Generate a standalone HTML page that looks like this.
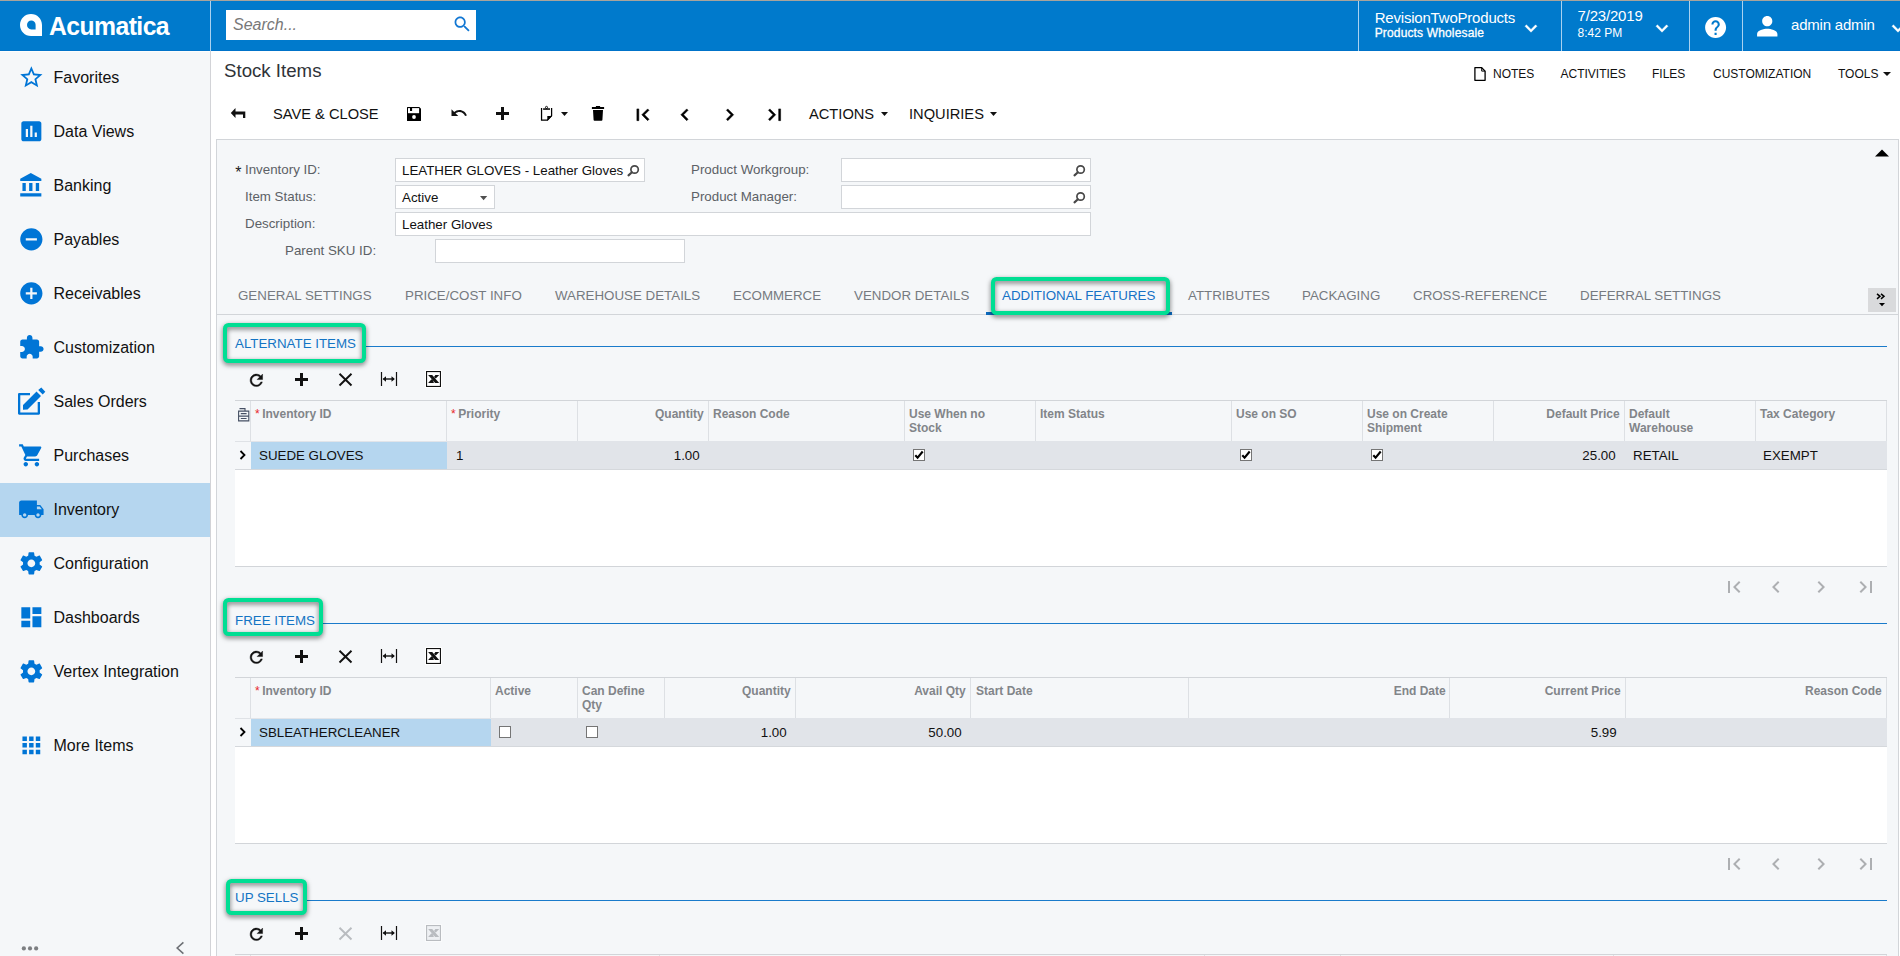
<!DOCTYPE html>
<html lang="en"><head><meta charset="utf-8"><title>Stock Items</title>
<style>
*{box-sizing:border-box;margin:0;padding:0}
html,body{width:1900px;height:956px;overflow:hidden;background:#fff}
body{font-family:"Liberation Sans",sans-serif;color:#000;position:relative}
#root{position:absolute;left:0;top:0;width:1900px;height:956px;overflow:hidden;background:#fff}
.ab{position:absolute;display:block}
.t{position:absolute;white-space:nowrap;line-height:1;transform:translateY(-50%)}
.r{transform:translate(-100%,-50%)}
.nav{font-size:16px;color:#111;margin-top:1px;margin-left:.5px}
.lbl{font-size:13.33px;color:#5c6166}
.inp{position:absolute;background:#fff;border:1px solid #d2d5d9;height:24px}
.val{font-size:13.33px;color:#111;margin-top:.5px}
.tab{font-size:13.33px;color:#757a80;margin-top:.5px}
.tb{font-size:14.67px;color:#111;margin-top:-.4px}
.tl{font-size:12px;color:#111}
.hd{font-size:12px;font-weight:bold;color:#828589;line-height:14px;position:absolute;white-space:nowrap}
.hr{text-align:right}
.cell{font-size:13.33px;color:#111}
.sec{font-size:13.33px;color:#1374c4;margin-top:.6px}
.hl{position:absolute;border:4px solid #00de93;border-radius:5.5px;filter:drop-shadow(0 2px 2.5px rgba(0,0,0,.55))}
.cb{position:absolute;width:12px;height:12px;background:#fff;border:1px solid #757575}
</style></head><body><div id="root">

<div class="ab " style="left:0px;top:0px;width:1900px;height:51px;background:#007acc"></div>
<div class="ab " style="left:0px;top:0px;width:1900px;height:1px;background:#a8a49c"></div>
<div class="ab " style="left:0px;top:50px;width:1900px;height:1px;background:#0073c9"></div>
<div class="ab " style="left:210px;top:1px;width:1px;height:50px;background:#a9d2f0"></div>
<svg class="ab" style="left:19px;top:13px" width="24" height="24" viewBox="0 0 24 24"><path fill="#fff" d="M12 1C5.9 1 1 5.9 1 12s4.900 11 11 11h11V12C23 5.900 18.100 1 12 1zm.300 6.500c2.400 0 4.300 1.900 4.300 4.300v4.600h-4.300c-2.400 0-4.300-2-4.300-4.400s1.900-4.500 4.300-4.500z" fill-rule="evenodd"/></svg>
<div class="t " style="left:49px;top:26px;font-size:26px;font-weight:bold;color:#fff;letter-spacing:-.6px;transform:translateY(-50%) scaleX(.952);transform-origin:0 50%">Acumatica</div>
<div class="ab " style="left:226px;top:10px;width:250px;height:30px;background:#fff"></div>
<div class="t " style="left:233px;top:25px;font-size:16px;font-style:italic;color:#787878">Search...</div>
<svg class="ab" style="left:451.60px;top:14.10px" width="20.6" height="20.6" viewBox="0 0 24 24"><path fill="#1277d3" d="M15.5 14h-.79l-.28-.27C15.41 12.59 16 11.11 16 9.5 16 5.91 13.09 3 9.5 3S3 5.91 3 9.5 5.91 16 9.5 16c1.61 0 3.09-.59 4.23-1.57l.27.28v.79l5 4.99L20.49 19l-4.99-5zm-6 0C7.01 14 5 11.99 5 9.5S7.01 5 9.5 5 14 7.01 14 9.5 11.99 14 9.5 14z" /></svg>
<div class="ab " style="left:1358px;top:1px;width:1px;height:50px;background:#a9d2f0"></div>
<div class="ab " style="left:1561px;top:1px;width:1px;height:50px;background:#a9d2f0"></div>
<div class="ab " style="left:1689px;top:1px;width:1px;height:50px;background:#a9d2f0"></div>
<div class="ab " style="left:1742px;top:1px;width:1px;height:50px;background:#a9d2f0"></div>
<div class="t " style="left:1374.7px;top:16.5px;font-size:15px;color:#fff;letter-spacing:-.2px">RevisionTwoProducts</div>
<div class="t " style="left:1374.7px;top:33px;font-size:12px;color:#fff;letter-spacing:.15px;-webkit-text-stroke:.3px #fff">Products Wholesale</div>
<svg class="ab" style="left:1519.00px;top:17.20px" width="24" height="24" viewBox="0 0 24 24"><path fill="#fff" d="M7.41 7.84L12 12.42l4.59-4.58L18 9.25l-6 6-6-6z" stroke="#fff" stroke-width=".4"/></svg>
<div class="t " style="left:1577.6px;top:15px;font-size:15px;color:#fff;letter-spacing:-.2px">7/23/2019</div>
<div class="t " style="left:1577.6px;top:33px;font-size:12px;color:#fff">8:42 PM</div>
<svg class="ab" style="left:1650.00px;top:17.20px" width="24" height="24" viewBox="0 0 24 24"><path fill="#fff" d="M7.41 7.84L12 12.42l4.59-4.58L18 9.25l-6 6-6-6z" stroke="#fff" stroke-width=".4"/></svg>
<svg class="ab" style="left:1703.00px;top:14.70px" width="25.2" height="25.2" viewBox="0 0 24 24"><path fill="#fff" d="M12 2C6.48 2 2 6.48 2 12s4.48 10 10 10 10-4.48 10-10S17.52 2 12 2zm1 17h-2v-2h2v2zm2.070-7.75l-.9.92C13.45 12.9 13 13.5 13 15h-2v-.5c0-1.1.45-2.1 1.17-2.83l1.24-1.26c.37-.36.59-.86.59-1.41 0-1.1-.9-2-2-2s-2 .9-2 2H8c0-2.21 1.79-4 4-4s4 1.79 4 4c0 .88-.36 1.68-.93 2.25z" /></svg>
<svg class="ab" style="left:1752.25px;top:10.95px" width="30.5" height="30.5" viewBox="0 0 24 24"><path fill="#fff" d="M12 12c2.21 0 4-1.79 4-4s-1.79-4-4-4-4 1.79-4 4 1.79 4 4 4zm0 2c-2.67 0-8 1.34-8 4v2h16v-2c0-2.66-5.33-4-8-4z" /></svg>
<div class="t " style="left:1791px;top:24.4px;font-size:15px;color:#fff;letter-spacing:-.2px">admin admin</div>
<svg class="ab" style="left:1886.00px;top:17.20px" width="24" height="24" viewBox="0 0 24 24"><path fill="#fff" d="M7.41 7.84L12 12.42l4.59-4.58L18 9.25l-6 6-6-6z" stroke="#fff" stroke-width=".4"/></svg>
<div class="ab " style="left:0px;top:51px;width:210px;height:905px;background:#f5f7f9"></div>
<div class="ab " style="left:210px;top:51px;width:1px;height:905px;background:#d2d3d7"></div>
<div class="ab " style="left:0px;top:51px;width:210px;height:1px;background:#fdfdfc"></div>
<div class="ab " style="left:0px;top:483px;width:210px;height:54px;background:#b5d6ef"></div>
<svg class="ab" style="left:18.15px;top:63.85px" width="26.7" height="26.7" viewBox="0 0 24 24"><path fill="#0075d6" d="M22 9.24l-7.19-.62L12 2 9.19 8.63 2 9.24l5.46 4.73L5.82 21 12 17.27 18.18 21l-1.63-7.03L22 9.24zM12 15.4l-3.76 2.27 1-4.28-3.32-2.88 4.38-.38L12 6.1l1.71 4.04 4.38.38-3.32 2.88 1 4.28L12 15.4z" /></svg>
<div class="t nav" style="left:53px;top:77px;">Favorites</div>
<svg class="ab" style="left:18.15px;top:117.85px" width="26.7" height="26.7" viewBox="0 0 24 24"><path fill="#0075d6" d="M19 3H5c-1.1 0-2 .9-2 2v14c0 1.1.9 2 2 2h14c1.1 0 2-.9 2-2V5c0-1.1-.9-2-2-2zM9 17H7v-7h2v7zm4 0h-2V7h2v10zm4 0h-2v-4h2v4z" /></svg>
<div class="t nav" style="left:53px;top:131px;">Data Views</div>
<svg class="ab" style="left:18.15px;top:171.85px" width="26.7" height="26.7" viewBox="0 0 24 24"><path fill="#0075d6" d="M4 10v7h3v-7H4zm6 0v7h3v-7h-3zM2 22h19v-3H2v3zm14-12v7h3v-7h-3zm-4.5-9L2 6v2h19V6l-9.5-5z" /></svg>
<div class="t nav" style="left:53px;top:185px;">Banking</div>
<svg class="ab" style="left:18.15px;top:225.85px" width="26.7" height="26.7" viewBox="0 0 24 24"><path fill="#0075d6" d="M12 2C6.48 2 2 6.48 2 12s4.48 10 10 10 10-4.48 10-10S17.52 2 12 2zm5 11H7v-2h10v2z" /></svg>
<div class="t nav" style="left:53px;top:239px;">Payables</div>
<svg class="ab" style="left:18.15px;top:279.85px" width="26.7" height="26.7" viewBox="0 0 24 24"><path fill="#0075d6" d="M12 2C6.48 2 2 6.48 2 12s4.48 10 10 10 10-4.48 10-10S17.52 2 12 2zm5 11h-4v4h-2v-4H7v-2h4V7h2v4h4v2z" /></svg>
<div class="t nav" style="left:53px;top:293px;">Receivables</div>
<svg class="ab" style="left:18.15px;top:333.85px" width="26.7" height="26.7" viewBox="0 0 24 24"><path fill="#0075d6" d="M20.5 11H19V7c0-1.1-.9-2-2-2h-4V3.5C13 2.12 11.88 1 10.5 1S8 2.12 8 3.5V5H4c-1.1 0-1.99.9-1.99 2v3.8H3.5c1.49 0 2.7 1.21 2.7 2.7s-1.21 2.7-2.7 2.7H2V20c0 1.1.9 2 2 2h3.8v-1.5c0-1.49 1.21-2.7 2.7-2.7 1.49 0 2.7 1.21 2.7 2.7V22H17c1.1 0 2-.9 2-2v-4h1.5c1.38 0 2.5-1.12 2.5-2.5S21.880 11 20.5 11z" /></svg>
<div class="t nav" style="left:53px;top:347px;">Customization</div>
<svg class="ab" style="left:17px;top:386px" width="30" height="30" viewBox="0 0 30 30"><path fill="none" stroke="#0075d6" stroke-width="2.300" stroke-linejoin="round" d="M13 8.150H2.150V27.550H21.850V16"/><path fill="#0075d6" d="M6 19L19.500 5.500l4.500 4.500L10.500 23.500l-4.500.3zM21.200 4l3.100-2.400 4 4.200-2.600 2.600z"/></svg>
<div class="t nav" style="left:53px;top:401px;">Sales Orders</div>
<svg class="ab" style="left:18.15px;top:441.85px" width="26.7" height="26.7" viewBox="0 0 24 24"><path fill="#0075d6" d="M7 18c-1.1 0-1.99.9-1.99 2S5.9 22 7 22s2-.9 2-2-.9-2-2-2zM1 2v2h2l3.6 7.59-1.35 2.45c-.16.28-.25.61-.25.96 0 1.1.9 2 2 2h12v-2H7.42c-.14 0-.25-.11-.25-.25l.03-.12.9-1.63h7.45c.75 0 1.41-.41 1.75-1.03l3.58-6.49c.08-.14.12-.31.12-.48 0-.55-.45-1-1-1H5.21l-.94-2H1zm16 16c-1.1 0-1.99.9-1.99 2s.89 2 1.99 2 2-.9 2-2-.9-2-2-2z" /></svg>
<div class="t nav" style="left:53px;top:455px;">Purchases</div>
<svg class="ab" style="left:18.15px;top:495.85px" width="26.7" height="26.7" viewBox="0 0 24 24"><path fill="#0075d6" d="M20 8h-3V4H3c-1.1 0-2 .9-2 2v11h2c0 1.66 1.34 3 3 3s3-1.34 3-3h6c0 1.66 1.34 3 3 3s3-1.34 3-3h2v-5l-3-4zM6 18.5c-.83 0-1.5-.67-1.5-1.5s.67-1.5 1.5-1.5 1.5.67 1.5 1.5-.67 1.5-1.5 1.5zm13.5-9l1.96 2.5H17V9.5h2.5zm-1.5 9c-.83 0-1.5-.67-1.5-1.5s.67-1.5 1.5-1.5 1.5.67 1.5 1.5-.67 1.5-1.5 1.5z" /></svg>
<div class="t nav" style="left:53px;top:509px;">Inventory</div>
<svg class="ab" style="left:18.15px;top:549.85px" width="26.7" height="26.7" viewBox="0 0 24 24"><path fill="#0075d6" d="M19.43 12.98c.04-.32.07-.64.07-.98s-.03-.66-.07-.98l2.11-1.65c.19-.15.24-.42.12-.64l-2-3.46c-.12-.22-.39-.3-.61-.22l-2.49 1c-.52-.4-1.08-.73-1.69-.98l-.38-2.65C14.46 2.18 14.25 2 14 2h-4c-.25 0-.46.18-.49.42l-.38 2.65c-.61.25-1.17.59-1.69.98l-2.49-1c-.23-.09-.49 0-.61.22l-2 3.46c-.13.22-.07.49.12.64l2.11 1.65c-.04.32-.07.65-.07.98s.03.66.07.98l-2.11 1.65c-.19.15-.24.42-.12.64l2 3.46c.12.22.39.3.61.22l2.49-1c.52.4 1.08.73 1.69.98l.38 2.65c.03.24.24.42.49.42h4c.25 0 .46-.18.49-.42l.38-2.65c.61-.25 1.17-.59 1.69-.98l2.49 1c.23.09.49 0 .61-.22l2-3.46c.12-.22.07-.49-.12-.64l-2.11-1.65zM12 15.5c-1.93 0-3.5-1.57-3.5-3.5s1.57-3.500 3.5-3.500 3.500 1.570 3.500 3.500-1.570 3.500-3.500 3.500z" /></svg>
<div class="t nav" style="left:53px;top:563px;">Configuration</div>
<svg class="ab" style="left:18.15px;top:603.85px" width="26.7" height="26.7" viewBox="0 0 24 24"><path fill="#0075d6" d="M3 13h8V3H3v10zm0 8h8v-6H3v6zm10 0h8V11h-8v10zm0-18v6h8V3h-8z" /></svg>
<div class="t nav" style="left:53px;top:617px;">Dashboards</div>
<svg class="ab" style="left:18.15px;top:657.85px" width="26.7" height="26.7" viewBox="0 0 24 24"><path fill="#0075d6" d="M19.43 12.98c.04-.32.07-.64.07-.98s-.03-.66-.07-.98l2.11-1.65c.19-.15.24-.42.12-.64l-2-3.46c-.12-.22-.39-.3-.61-.22l-2.49 1c-.52-.4-1.08-.73-1.69-.98l-.38-2.65C14.46 2.18 14.25 2 14 2h-4c-.25 0-.46.18-.49.42l-.38 2.65c-.61.25-1.17.59-1.69.98l-2.49-1c-.23-.09-.49 0-.61.22l-2 3.46c-.13.22-.07.49.12.64l2.11 1.65c-.04.32-.07.65-.07.98s.03.66.07.98l-2.11 1.65c-.19.15-.24.42-.12.64l2 3.46c.12.22.39.3.61.22l2.49-1c.52.4 1.08.73 1.69.98l.38 2.65c.03.24.24.42.49.42h4c.25 0 .46-.18.49-.42l.38-2.65c.61-.25 1.17-.59 1.69-.98l2.49 1c.23.09.49 0 .61-.22l2-3.46c.12-.22.07-.49-.12-.64l-2.11-1.65zM12 15.5c-1.93 0-3.5-1.57-3.5-3.5s1.57-3.500 3.5-3.500 3.500 1.570 3.500 3.500-1.570 3.500-3.500 3.500z" /></svg>
<div class="t nav" style="left:53px;top:671px;">Vertex Integration</div>
<svg class="ab" style="left:18.15px;top:731.85px" width="26.7" height="26.7" viewBox="0 0 24 24"><path fill="#0075d6" d="M4 8h4V4H4v4zm6 12h4v-4h-4v4zm-6 0h4v-4H4v4zm0-6h4v-4H4v4zm6 0h4v-4h-4v4zm6-10v4h4V4h-4zm-6 4h4V4h-4v4zm6 6h4v-4h-4v4zm0 6h4v-4h-4v4z" /></svg>
<div class="t nav" style="left:53px;top:745px;">More Items</div>
<svg class="ab" style="left:21px;top:945px" width="18" height="7" viewBox="0 0 18 7"><circle cx="2.850" cy="3.400" r="2.100" fill="#7d7f82"/><circle cx="9" cy="3.400" r="2.100" fill="#7d7f82"/><circle cx="15.150" cy="3.400" r="2.100" fill="#7d7f82"/></svg>
<svg class="ab" style="left:175px;top:941px" width="10" height="14" viewBox="0 0 10 14"><path d="M8.400 1.400L2.200 7l6.200 5.600" fill="none" stroke="#6d7075" stroke-width="1.600"/></svg>
<div class="ab " style="left:211px;top:51px;width:1689px;height:88px;background:#fff"></div>
<div class="t " style="left:224px;top:70.6px;font-size:18.67px;color:#2f3338">Stock Items</div>
<svg class="ab" style="left:1474px;top:67px" width="12" height="14" viewBox="0 0 12 14"><path fill="none" stroke="#000" stroke-width="1.300" stroke-linejoin="round" d="M.900 .700h6.800l3.400 3.400v9.200H.900z"/><path fill="none" stroke="#000" stroke-width="1" d="M7.700 .700v3.400h3.400"/></svg>
<div class="t tl" style="left:1493px;top:74px;">NOTES</div>
<div class="t tl" style="left:1560.5px;top:74px;">ACTIVITIES</div>
<div class="t tl" style="left:1652px;top:74px;">FILES</div>
<div class="t tl" style="left:1713px;top:74px;">CUSTOMIZATION</div>
<div class="t tl" style="left:1838px;top:74px;">TOOLS</div>
<svg class="ab" style="left:1883px;top:72px" width="8" height="4" viewBox="0 0 8 4"><path d="M0 0h8L4 4z" fill="#111"/></svg>
<svg class="ab" style="left:230px;top:107px" width="16" height="12" viewBox="0 0 16 12"><path fill="#111" d="M.8 6L5.500 1v3.500h9.800V11H13V7.500H5.500V11z"/></svg>
<div class="t tb" style="left:273px;top:114px;">SAVE &amp; CLOSE</div>
<svg class="ab" style="left:407px;top:107px" width="14" height="14" viewBox="0 0 14 14"><path fill="#000" d="M.6 0H12.300L14 1.700V13.400a.6 .6 0 0 1-.6 .6H.600a.6 .6 0 0 1-.6-.6V.600A.6 .6 0 0 1 .600 0z"/><path fill="#fff" d="M1 1.100h11.100v5.100H1z"/><path fill="#000" d="M3 1h2.100v3H3z"/><circle cx="7" cy="10" r="1.900" fill="#fff"/></svg>
<svg class="ab" style="left:449.60px;top:104.20px" width="18" height="18" viewBox="0 0 24 24"><path fill="#111" d="M12.5 8c-2.65 0-5.05.99-6.9 2.6L2 7v9h9l-3.62-3.62c1.39-1.16 3.16-1.88 5.12-1.88 3.54 0 6.55 2.31 7.6 5.5l2.37-.78C21.08 11.03 17.15 8 12.5 8z" /></svg>
<svg class="ab" style="left:496px;top:107px" width="13" height="13" viewBox="0 0 13 13"><path fill="#111" d="M5 0h3v5h5v3H8v5H5V8H0V5h5z"/></svg>
<svg class="ab" style="left:540px;top:105px" width="13" height="17" viewBox="0 0 13 17"><path fill="none" stroke="#000" stroke-width="1.250" d="M1.550 3v12.200h5.900l4.150-4.500V3"/><path fill="#000" d="M7.300 15.800v-4.900h4.700z"/><path fill="#000" d="M3.100 3.300h6.900v1.500H3.100z"/><circle cx="6.500" cy="2.400" r="1.050" fill="none" stroke="#000" stroke-width=".9"/></svg>
<svg class="ab" style="left:561px;top:112px" width="8" height="4" viewBox="0 0 8 4"><path d="M0 0h7L3.500 4z" fill="#111"/></svg>
<svg class="ab" style="left:591px;top:105px" width="14" height="16" viewBox="0 0 14 16"><path fill="#000" d="M4.900 .9h4.200v1.300H4.900zM.900 2h12.200v1.900H.900zM2 5.100h10l-.6 9.900a.9 .9 0 0 1-.9 .8H3.500a.9 .9 0 0 1-.9-.8z"/></svg>
<svg class="ab" style="left:631.45px;top:102.85px" width="23.5" height="23.5" viewBox="0 0 24 24"><path fill="#000" d="M18.41 16.59L13.82 12l4.59-4.59L17 6l-6 6 6 6zM6 6h2v12H6z" stroke="#000" stroke-width=".5"/></svg>
<svg class="ab" style="left:672.85px;top:102.85px" width="23.5" height="23.5" viewBox="0 0 24 24"><path fill="#000" d="M15.41 7.41L14 6l-6 6 6 6 1.41-1.41L10.83 12z" stroke="#000" stroke-width=".5"/></svg>
<svg class="ab" style="left:717.75px;top:102.85px" width="23.5" height="23.5" viewBox="0 0 24 24"><path fill="#000" d="M10 6L8.59 7.41 13.17 12l-4.58 4.59L10 18l6-6z" stroke="#000" stroke-width=".5"/></svg>
<svg class="ab" style="left:763.25px;top:102.85px" width="23.5" height="23.5" viewBox="0 0 24 24"><path fill="#000" d="M5.59 7.41L10.18 12l-4.59 4.59L7 18l6-6-6-6zM16 6h2v12h-2z" stroke="#000" stroke-width=".5"/></svg>
<div class="t tb" style="left:809px;top:114px;">ACTIONS</div>
<svg class="ab" style="left:881px;top:112px" width="8" height="4" viewBox="0 0 8 4"><path d="M0 0h7L3.500 4z" fill="#111"/></svg>
<div class="t tb" style="left:909px;top:114px;">INQUIRIES</div>
<svg class="ab" style="left:990px;top:112px" width="8" height="4" viewBox="0 0 8 4"><path d="M0 0h7L3.500 4z" fill="#111"/></svg>
<div class="ab " style="left:216px;top:139px;width:1683px;height:817px;background:#f5f7f9;border:1px solid #d2d5d9;border-bottom:none"></div>
<svg class="ab" style="left:1875px;top:149px" width="14" height="8" viewBox="0 0 14 8"><path d="M0 7.500L7 .500l7 7z" fill="#000"/></svg>
<div class="t " style="left:235.3px;top:173px;font-size:16px;color:#222">*</div>
<div class="t lbl" style="left:245px;top:170px;">Inventory ID:</div>
<div class="inp" style="left:395px;top:158px;width:250px"></div>
<div class="t val" style="left:402px;top:170px;">LEATHER GLOVES - Leather Gloves</div>
<svg class="ab" style="left:627px;top:164px" width="13" height="13" viewBox="0 0 13 13"><circle cx="7.600" cy="5.500" r="3.700" fill="none" stroke="#484848" stroke-width="1.700"/><path d="M4.900 8.300L1.500 11.400" stroke="#484848" stroke-width="2.100" stroke-linecap="round"/></svg>
<div class="t lbl" style="left:245px;top:197px;">Item Status:</div>
<div class="inp" style="left:395px;top:185px;width:100px"></div>
<div class="t val" style="left:402px;top:197px;">Active</div>
<svg class="ab" style="left:480px;top:195.7px" width="8" height="5" viewBox="0 0 8 5"><path d="M0 0h7.200L3.600 4.300z" fill="#505050"/></svg>
<div class="t lbl" style="left:245px;top:224px;">Description:</div>
<div class="inp" style="left:395px;top:212px;width:696px"></div>
<div class="t val" style="left:402px;top:224px;">Leather Gloves</div>
<div class="t lbl" style="left:285px;top:251px;">Parent SKU ID:</div>
<div class="inp" style="left:435px;top:239px;width:250px"></div>
<div class="t lbl" style="left:691px;top:170px;">Product Workgroup:</div>
<div class="inp" style="left:841px;top:158px;width:250px"></div>
<svg class="ab" style="left:1073px;top:164px" width="13" height="13" viewBox="0 0 13 13"><circle cx="7.600" cy="5.500" r="3.700" fill="none" stroke="#484848" stroke-width="1.700"/><path d="M4.900 8.300L1.500 11.400" stroke="#484848" stroke-width="2.100" stroke-linecap="round"/></svg>
<div class="t lbl" style="left:691px;top:197px;">Product Manager:</div>
<div class="inp" style="left:841px;top:185px;width:250px"></div>
<svg class="ab" style="left:1073px;top:191px" width="13" height="13" viewBox="0 0 13 13"><circle cx="7.600" cy="5.500" r="3.700" fill="none" stroke="#484848" stroke-width="1.700"/><path d="M4.900 8.300L1.500 11.400" stroke="#484848" stroke-width="2.100" stroke-linecap="round"/></svg>
<div class="t tab" style="left:238px;top:295px;">GENERAL SETTINGS</div>
<div class="t tab" style="left:405px;top:295px;">PRICE/COST INFO</div>
<div class="t tab" style="left:555px;top:295px;">WAREHOUSE DETAILS</div>
<div class="t tab" style="left:733px;top:295px;">ECOMMERCE</div>
<div class="t tab" style="left:854px;top:295px;">VENDOR DETAILS</div>
<div class="t tab" style="left:1002px;top:295px;color:#1671c5">ADDITIONAL FEATURES</div>
<div class="t tab" style="left:1188px;top:295px;">ATTRIBUTES</div>
<div class="t tab" style="left:1302px;top:295px;">PACKAGING</div>
<div class="t tab" style="left:1413px;top:295px;">CROSS-REFERENCE</div>
<div class="t tab" style="left:1580px;top:295px;">DEFERRAL SETTINGS</div>
<div class="ab " style="left:217px;top:314px;width:1681px;height:1px;background:#d2d5d9"></div>
<div class="ab " style="left:986px;top:312px;width:186px;height:3px;background:#0d6cc0"></div>
<div class="ab " style="left:1868px;top:288px;width:28px;height:24px;background:#d9dadc"></div>
<svg class="ab" style="left:1876.3px;top:293.3px" width="10" height="7" viewBox="0 0 10 7"><path d="M1 .800l3 2.500-3 2.500M5 .800l3 2.500-3 2.500" fill="none" stroke="#000" stroke-width="1.500"/></svg>
<svg class="ab" style="left:1878.5px;top:302.8px" width="6" height="4" viewBox="0 0 6 4"><path d="M0 0h6L3 3.300z" fill="#000"/></svg>
<div class="hl" style="left:991px;top:277px;width:179px;height:38px"></div>
<div class="ab " style="left:235px;top:346px;width:1652px;height:1px;background:#1a7bcb"></div>
<div class="ab " style="left:223px;top:323px;width:143px;height:40px;background:#f5f7f9"></div>
<div class="t sec" style="left:235px;top:343px;">ALTERNATE ITEMS</div>
<div class="hl" style="left:223px;top:323px;width:143px;height:40px"></div>
<svg class="ab" style="left:246.55px;top:370.65px" width="18.7" height="18.7" viewBox="0 0 24 24"><path fill="#111" d="M17.65 6.35C16.2 4.9 14.21 4 12 4c-4.42 0-7.99 3.58-7.99 8s3.57 8 7.99 8c3.73 0 6.84-2.55 7.73-6h-2.08c-.82 2.33-3.04 4-5.65 4-3.31 0-6-2.69-6-6s2.69-6 6-6c1.66 0 3.14.69 4.22 1.78L13 11h7V4l-2.35 2.35z" stroke="#111" stroke-width=".55"/></svg>
<svg class="ab" style="left:295px;top:372.5px" width="13" height="13" viewBox="0 0 13 13"><path fill="#111" d="M5 0h3v5h5v3H8v5H5V8H0V5h5z"/></svg>
<svg class="ab" style="left:338px;top:372px" width="15" height="15" viewBox="0 0 15 15"><path d="M1.500 1.700l12 11.800M13.500 1.700l-12 11.800" stroke="#111" stroke-width="1.900" fill="none"/></svg>
<svg class="ab" style="left:380px;top:372px" width="18" height="14" viewBox="0 0 18 14"><path d="M1.500 0v14M16.500 0v14" stroke="#111" stroke-width="1.200"/><path d="M3.500 7h10.500" stroke="#111" stroke-width="1.400"/><path d="M2.600 7l3.400-2.800v5.600zM14.900 7l-3.400-2.800v5.600z" fill="#111"/></svg>
<svg class="ab" style="left:425px;top:370px" width="17" height="18" viewBox="0 0 17 18"><rect x="0" y="0" width="17" height="18" fill="#fff" opacity="1"/><rect x="1.550" y="1.550" width="13.900" height="14.900" fill="#fff" stroke="#111" stroke-width="1.100"/><path d="M3.100 5.100h4.100l7 7.900h-4.100z" fill="#111"/><path d="M10.400 5.100h3.800L10.800 8.600 9 7zM3.100 13h5.800l-.9-2.700-1.500-1.100z" fill="#111"/></svg>
<div class="ab " style="left:235px;top:400px;width:1652px;height:1px;background:#d2d5d9"></div>
<div class="ab " style="left:250px;top:401px;width:1px;height:41px;background:#dde0e4"></div>
<div class="ab " style="left:446px;top:401px;width:1px;height:41px;background:#dde0e4"></div>
<div class="ab " style="left:577px;top:401px;width:1px;height:41px;background:#dde0e4"></div>
<div class="ab " style="left:708px;top:401px;width:1px;height:41px;background:#dde0e4"></div>
<div class="ab " style="left:904px;top:401px;width:1px;height:41px;background:#dde0e4"></div>
<div class="ab " style="left:1035px;top:401px;width:1px;height:41px;background:#dde0e4"></div>
<div class="ab " style="left:1231px;top:401px;width:1px;height:41px;background:#dde0e4"></div>
<div class="ab " style="left:1362px;top:401px;width:1px;height:41px;background:#dde0e4"></div>
<div class="ab " style="left:1493px;top:401px;width:1px;height:41px;background:#dde0e4"></div>
<div class="ab " style="left:1624px;top:401px;width:1px;height:41px;background:#dde0e4"></div>
<div class="ab " style="left:1755px;top:401px;width:1px;height:41px;background:#dde0e4"></div>
<div class="ab " style="left:1886px;top:401px;width:1px;height:41px;background:#dde0e4"></div>
<svg class="ab" style="left:238px;top:408px" width="12" height="14" viewBox="0 0 12 14"><path fill="none" stroke="#465064" stroke-width="1.100" d="M1.500 .600h5.500v2.500M.600 3.100h10.200v5H.600zM.600 8.100h10.200v4.800H.600z"/><path d="M2.800 5.600h5.800M2.800 10.500h5.800" stroke="#465064" stroke-width="1.100"/></svg>
<div class="hd" style="left:262.2px;top:407px">Inventory ID</div>
<div class="hd" style="left:255px;top:407px;color:#e8262a;font-weight:normal">*</div>
<div class="hd" style="left:458.2px;top:407px">Priority</div>
<div class="hd" style="left:451px;top:407px;color:#e8262a;font-weight:normal">*</div>
<div class="hd" style="right:1196.3px;top:407px">Quantity</div>
<div class="hd" style="left:713px;top:407px">Reason Code</div>
<div class="hd" style="left:909px;top:407px">Use When no</div>
<div class="hd" style="left:909px;top:421px">Stock</div>
<div class="hd" style="left:1040px;top:407px">Item Status</div>
<div class="hd" style="left:1236px;top:407px">Use on SO</div>
<div class="hd" style="left:1367px;top:407px">Use on Create</div>
<div class="hd" style="left:1367px;top:421px">Shipment</div>
<div class="hd" style="right:280.3px;top:407px">Default Price</div>
<div class="hd" style="left:1629px;top:407px">Default</div>
<div class="hd" style="left:1629px;top:421px">Warehouse</div>
<div class="hd" style="left:1760px;top:407px">Tax Category</div>
<div class="ab " style="left:235px;top:441px;width:16px;height:1px;background:#dfe2e6"></div>
<div class="ab " style="left:251px;top:441px;width:1636px;height:28px;background:#e1e4e9"></div>
<div class="ab " style="left:235px;top:442px;width:16px;height:27px;background:#f5f7f9"></div>
<div class="ab " style="left:251px;top:442px;width:196px;height:27px;background:#b5d6ef"></div>
<div class="ab " style="left:235px;top:469px;width:1652px;height:1px;background:#d5d8dc"></div>
<svg class="ab" style="left:239px;top:449.5px" width="8" height="10" viewBox="0 0 8 10"><path d="M1.500 1l4 4-4 4" fill="none" stroke="#000" stroke-width="1.800"/></svg>
<div class="t cell" style="left:259px;top:455.5px;">SUEDE GLOVES</div>
<div class="t cell" style="left:456px;top:455.5px;">1</div>
<div class="t cell r" style="left:699.7px;top:455.5px">1.00</div>
<div class="t cell r" style="left:1615.7px;top:455.5px">25.00</div>
<div class="t cell" style="left:1633px;top:455.5px;">RETAIL</div>
<div class="t cell" style="left:1763px;top:455.5px;">EXEMPT</div>
<div class="cb" style="left:913px;top:449px"></div>
<svg class="ab" style="left:914px;top:450px" width="11" height="11" viewBox="0 0 11 11"><path d="M1.300 5.200l2.300 2.500L8.700 1.500" fill="none" stroke="#000" stroke-width="2.100"/></svg>
<div class="cb" style="left:1240px;top:449px"></div>
<svg class="ab" style="left:1241px;top:450px" width="11" height="11" viewBox="0 0 11 11"><path d="M1.300 5.200l2.300 2.500L8.700 1.500" fill="none" stroke="#000" stroke-width="2.100"/></svg>
<div class="cb" style="left:1371px;top:449px"></div>
<svg class="ab" style="left:1372px;top:450px" width="11" height="11" viewBox="0 0 11 11"><path d="M1.300 5.200l2.300 2.500L8.700 1.500" fill="none" stroke="#000" stroke-width="2.100"/></svg>
<div class="ab " style="left:235px;top:470px;width:1652px;height:96px;background:#fff"></div>
<div class="ab " style="left:235px;top:566px;width:1652px;height:1px;background:#d2d5d9"></div>
<svg class="ab" style="left:1721.80px;top:575.40px" width="24" height="24" viewBox="0 0 24 24"><path fill="#adafb2" d="M18.41 16.59L13.82 12l4.59-4.59L17 6l-6 6 6 6zM6 6h2v12H6z" /></svg>
<svg class="ab" style="left:1764.45px;top:575.40px" width="24" height="24" viewBox="0 0 24 24"><path fill="#adafb2" d="M15.41 7.41L14 6l-6 6 6 6 1.41-1.41L10.83 12z" /></svg>
<svg class="ab" style="left:1808.60px;top:575.40px" width="24" height="24" viewBox="0 0 24 24"><path fill="#adafb2" d="M10 6L8.59 7.41 13.17 12l-4.58 4.59L10 18l6-6z" /></svg>
<svg class="ab" style="left:1853.95px;top:575.40px" width="24" height="24" viewBox="0 0 24 24"><path fill="#adafb2" d="M5.59 7.41L10.18 12l-4.59 4.59L7 18l6-6-6-6zM16 6h2v12h-2z" /></svg>
<div class="ab " style="left:235px;top:623px;width:1652px;height:1px;background:#1a7bcb"></div>
<div class="ab " style="left:223px;top:598px;width:100px;height:38px;background:#f5f7f9"></div>
<div class="t sec" style="left:235px;top:620px;">FREE ITEMS</div>
<div class="hl" style="left:223px;top:598px;width:100px;height:38px"></div>
<svg class="ab" style="left:246.55px;top:647.65px" width="18.7" height="18.7" viewBox="0 0 24 24"><path fill="#111" d="M17.65 6.35C16.2 4.9 14.21 4 12 4c-4.42 0-7.99 3.58-7.99 8s3.57 8 7.99 8c3.73 0 6.84-2.55 7.73-6h-2.08c-.82 2.33-3.04 4-5.65 4-3.31 0-6-2.69-6-6s2.69-6 6-6c1.66 0 3.14.69 4.22 1.78L13 11h7V4l-2.35 2.35z" stroke="#111" stroke-width=".55"/></svg>
<svg class="ab" style="left:295px;top:649.5px" width="13" height="13" viewBox="0 0 13 13"><path fill="#111" d="M5 0h3v5h5v3H8v5H5V8H0V5h5z"/></svg>
<svg class="ab" style="left:338px;top:649px" width="15" height="15" viewBox="0 0 15 15"><path d="M1.500 1.700l12 11.800M13.500 1.700l-12 11.800" stroke="#111" stroke-width="1.900" fill="none"/></svg>
<svg class="ab" style="left:380px;top:649px" width="18" height="14" viewBox="0 0 18 14"><path d="M1.500 0v14M16.500 0v14" stroke="#111" stroke-width="1.200"/><path d="M3.500 7h10.500" stroke="#111" stroke-width="1.400"/><path d="M2.600 7l3.400-2.800v5.600zM14.900 7l-3.400-2.800v5.600z" fill="#111"/></svg>
<svg class="ab" style="left:425px;top:647px" width="17" height="18" viewBox="0 0 17 18"><rect x="0" y="0" width="17" height="18" fill="#fff" opacity="1"/><rect x="1.550" y="1.550" width="13.900" height="14.900" fill="#fff" stroke="#111" stroke-width="1.100"/><path d="M3.100 5.100h4.100l7 7.900h-4.100z" fill="#111"/><path d="M10.400 5.100h3.800L10.800 8.600 9 7zM3.100 13h5.800l-.9-2.700-1.500-1.100z" fill="#111"/></svg>
<div class="ab " style="left:235px;top:677px;width:1652px;height:1px;background:#d2d5d9"></div>
<div class="ab " style="left:250px;top:678px;width:1px;height:41px;background:#dde0e4"></div>
<div class="ab " style="left:490px;top:678px;width:1px;height:41px;background:#dde0e4"></div>
<div class="ab " style="left:577px;top:678px;width:1px;height:41px;background:#dde0e4"></div>
<div class="ab " style="left:664px;top:678px;width:1px;height:41px;background:#dde0e4"></div>
<div class="ab " style="left:795px;top:678px;width:1px;height:41px;background:#dde0e4"></div>
<div class="ab " style="left:970px;top:678px;width:1px;height:41px;background:#dde0e4"></div>
<div class="ab " style="left:1188px;top:678px;width:1px;height:41px;background:#dde0e4"></div>
<div class="ab " style="left:1449px;top:678px;width:1px;height:41px;background:#dde0e4"></div>
<div class="ab " style="left:1625px;top:678px;width:1px;height:41px;background:#dde0e4"></div>
<div class="ab " style="left:1886px;top:678px;width:1px;height:41px;background:#dde0e4"></div>
<div class="hd" style="left:262.2px;top:684px">Inventory ID</div>
<div class="hd" style="left:255px;top:684px;color:#e8262a;font-weight:normal">*</div>
<div class="hd" style="left:495px;top:684px">Active</div>
<div class="hd" style="left:582px;top:684px">Can Define</div>
<div class="hd" style="left:582px;top:698px">Qty</div>
<div class="hd" style="right:1109.3px;top:684px">Quantity</div>
<div class="hd" style="right:934.3px;top:684px">Avail Qty</div>
<div class="hd" style="left:976px;top:684px">Start Date</div>
<div class="hd" style="right:454.3px;top:684px">End Date</div>
<div class="hd" style="right:279.3px;top:684px">Current Price</div>
<div class="hd" style="right:18.3px;top:684px">Reason Code</div>
<div class="ab " style="left:235px;top:718px;width:16px;height:1px;background:#dfe2e6"></div>
<div class="ab " style="left:251px;top:718px;width:1636px;height:28px;background:#e1e4e9"></div>
<div class="ab " style="left:235px;top:719px;width:16px;height:27px;background:#f5f7f9"></div>
<div class="ab " style="left:251px;top:719px;width:240px;height:27px;background:#b5d6ef"></div>
<div class="ab " style="left:235px;top:746px;width:1652px;height:1px;background:#d5d8dc"></div>
<svg class="ab" style="left:239px;top:726.5px" width="8" height="10" viewBox="0 0 8 10"><path d="M1.500 1l4 4-4 4" fill="none" stroke="#000" stroke-width="1.800"/></svg>
<div class="t cell" style="left:259px;top:732.5px;">SBLEATHERCLEANER</div>
<div class="t cell r" style="left:786.7px;top:732.5px">1.00</div>
<div class="t cell r" style="left:961.7px;top:732.5px">50.00</div>
<div class="t cell r" style="left:1616.7px;top:732.5px">5.99</div>
<div class="cb" style="left:499px;top:726px"></div>
<div class="cb" style="left:586px;top:726px"></div>
<div class="ab " style="left:235px;top:747px;width:1652px;height:96px;background:#fff"></div>
<div class="ab " style="left:235px;top:843px;width:1652px;height:1px;background:#d2d5d9"></div>
<svg class="ab" style="left:1721.80px;top:852.40px" width="24" height="24" viewBox="0 0 24 24"><path fill="#adafb2" d="M18.41 16.59L13.82 12l4.59-4.59L17 6l-6 6 6 6zM6 6h2v12H6z" /></svg>
<svg class="ab" style="left:1764.45px;top:852.40px" width="24" height="24" viewBox="0 0 24 24"><path fill="#adafb2" d="M15.41 7.41L14 6l-6 6 6 6 1.41-1.41L10.83 12z" /></svg>
<svg class="ab" style="left:1808.60px;top:852.40px" width="24" height="24" viewBox="0 0 24 24"><path fill="#adafb2" d="M10 6L8.59 7.41 13.17 12l-4.58 4.59L10 18l6-6z" /></svg>
<svg class="ab" style="left:1853.95px;top:852.40px" width="24" height="24" viewBox="0 0 24 24"><path fill="#adafb2" d="M5.59 7.41L10.18 12l-4.59 4.59L7 18l6-6-6-6zM16 6h2v12h-2z" /></svg>
<div class="ab " style="left:235px;top:900px;width:1652px;height:1px;background:#1a7bcb"></div>
<div class="ab " style="left:226px;top:879px;width:81px;height:36px;background:#f5f7f9"></div>
<div class="t sec" style="left:235px;top:897px;">UP SELLS</div>
<div class="hl" style="left:226px;top:879px;width:81px;height:36px"></div>
<svg class="ab" style="left:246.55px;top:924.65px" width="18.7" height="18.7" viewBox="0 0 24 24"><path fill="#111" d="M17.65 6.35C16.2 4.9 14.21 4 12 4c-4.42 0-7.99 3.58-7.99 8s3.57 8 7.99 8c3.73 0 6.84-2.55 7.73-6h-2.08c-.82 2.33-3.04 4-5.65 4-3.31 0-6-2.69-6-6s2.69-6 6-6c1.66 0 3.14.69 4.22 1.78L13 11h7V4l-2.35 2.35z" stroke="#111" stroke-width=".55"/></svg>
<svg class="ab" style="left:295px;top:926.5px" width="13" height="13" viewBox="0 0 13 13"><path fill="#111" d="M5 0h3v5h5v3H8v5H5V8H0V5h5z"/></svg>
<svg class="ab" style="left:338px;top:926px" width="15" height="15" viewBox="0 0 15 15"><path d="M1.500 1.700l12 11.800M13.500 1.700l-12 11.800" stroke="#b9bcc0" stroke-width="1.900" fill="none"/></svg>
<svg class="ab" style="left:380px;top:926px" width="18" height="14" viewBox="0 0 18 14"><path d="M1.500 0v14M16.500 0v14" stroke="#111" stroke-width="1.200"/><path d="M3.500 7h10.500" stroke="#111" stroke-width="1.400"/><path d="M2.600 7l3.400-2.800v5.600zM14.900 7l-3.400-2.800v5.600z" fill="#111"/></svg>
<svg class="ab" style="left:425px;top:924px" width="17" height="18" viewBox="0 0 17 18"><rect x="0" y="0" width="17" height="18" fill="#fff" opacity=".5"/><rect x="1.550" y="1.550" width="13.900" height="14.900" fill="#eef0f3" stroke="#b9bcc0" stroke-width="1.100"/><path d="M3.100 5.100h4.100l7 7.900h-4.100z" fill="#b9bcc0"/><path d="M10.400 5.100h3.800L10.800 8.600 9 7zM3.100 13h5.800l-.9-2.700-1.500-1.100z" fill="#b9bcc0"/></svg>
<div class="ab " style="left:235px;top:954px;width:1652px;height:1px;background:#d2d5d9"></div>
<div class="ab " style="left:250px;top:955px;width:1px;height:1px;background:#dde0e4"></div>
<div class="ab " style="left:659px;top:955px;width:1px;height:1px;background:#dde0e4"></div>
<div class="ab " style="left:1204px;top:955px;width:1px;height:1px;background:#dde0e4"></div>
<div class="ab " style="left:1340px;top:955px;width:1px;height:1px;background:#dde0e4"></div>
<div class="ab " style="left:1613px;top:955px;width:1px;height:1px;background:#dde0e4"></div>
<div class="ab " style="left:1886px;top:955px;width:1px;height:1px;background:#dde0e4"></div>
</div></body></html>
